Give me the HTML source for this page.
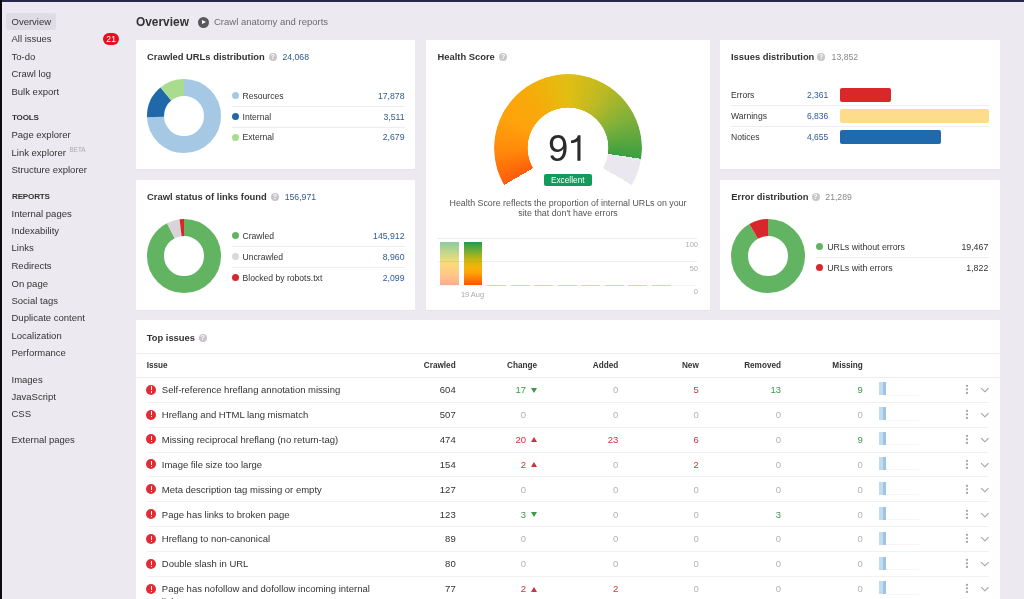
<!DOCTYPE html><html><head><meta charset="utf-8"><style>
*{margin:0;padding:0;box-sizing:border-box}
html,body{width:1024px;height:599px;overflow:hidden;background:#ede9f0;font-family:"Liberation Sans",sans-serif;color:#333}
.a{position:absolute;white-space:nowrap;line-height:12px}
.sb{position:absolute;left:11.5px;font-size:9.5px;color:#333;line-height:12px;white-space:nowrap}
.sh{position:absolute;left:12px;font-size:8.1px;font-weight:bold;color:#333;letter-spacing:-0.2px;line-height:12px}
.card{position:absolute;background:#fff;box-shadow:0 1px 0 rgba(90,60,100,0.035)}
.ttl{position:absolute;font-size:9.4px;font-weight:bold;color:#333;line-height:12px;white-space:nowrap}
.q{position:absolute;width:8px;height:8px;border-radius:50%;background:#c9c5ca}
.q:after{content:"?";position:absolute;left:0;top:0;width:8px;text-align:center;color:#fff;font-size:6.5px;font-weight:bold;line-height:8px}
.hn{position:absolute;font-size:8.7px;line-height:12px;white-space:nowrap}
.blue{color:#2f5a93}
.gray{color:#8a878c}
.lg{position:absolute;font-size:8.6px;line-height:12px;white-space:nowrap;color:#333}
.dot{position:absolute;width:7px;height:7px;border-radius:50%}
.sep{position:absolute;height:1px;background:#f0ebf0}
.rt{position:absolute;white-space:nowrap;line-height:12px;text-align:right;width:80px}
.th{font-size:8.2px;font-weight:bold;color:#333}
.td{font-size:9.5px}
.g{color:#3b9a4b}.r{color:#cc3141}.z{color:#b3b0b5}.k{color:#333}
.blue{color:#2f5a93}
.gray{color:#8a878c}
</style></head><body><div id="w" style="position:absolute;left:-4px;top:-4px;width:1036px;height:611px;background:#ede9f0;will-change:transform"><div style="position:absolute;left:4px;top:4px;width:1024px;height:599px">
<div style="position:absolute;left:-4px;top:-4px;width:1036px;height:6px;background:#262a48"></div>
<div style="position:absolute;left:-4px;top:-4px;width:6px;height:611px;background:#0c0c10"></div>
<div style="position:absolute;left:6px;top:13px;width:50px;height:16.5px;background:#dfdce6;border-radius:2px"></div>
<div class="sb" style="left:11.5px;top:15.50px;">Overview</div>
<div class="sb" style="left:11.5px;top:33.00px;">All issues</div>
<div class="sb" style="left:11.5px;top:50.50px;">To-do</div>
<div class="sb" style="left:11.5px;top:68.00px;">Crawl log</div>
<div class="sb" style="left:11.5px;top:85.50px;">Bulk export</div>
<div class="sb" style="left:11.5px;top:129.00px;">Page explorer</div>
<div class="sb" style="left:11.5px;top:146.50px;">Link explorer</div>
<div class="sb" style="left:11.5px;top:164.00px;">Structure explorer</div>
<div class="sb" style="left:11.5px;top:207.50px;">Internal pages</div>
<div class="sb" style="left:11.5px;top:225.00px;">Indexability</div>
<div class="sb" style="left:11.5px;top:242.00px;">Links</div>
<div class="sb" style="left:11.5px;top:259.60px;">Redirects</div>
<div class="sb" style="left:11.5px;top:277.50px;">On page</div>
<div class="sb" style="left:11.5px;top:295.20px;">Social tags</div>
<div class="sb" style="left:11.5px;top:312.20px;">Duplicate content</div>
<div class="sb" style="left:11.5px;top:329.80px;">Localization</div>
<div class="sb" style="left:11.5px;top:347.20px;">Performance</div>
<div class="sb" style="left:11.5px;top:373.50px;">Images</div>
<div class="sb" style="left:11.5px;top:390.80px;">JavaScript</div>
<div class="sb" style="left:11.5px;top:408.00px;">CSS</div>
<div class="sb" style="left:11.5px;top:434.00px;">External pages</div>
<div class="sh" style="left:12px;top:112.20px;">TOOLS</div>
<div class="sh" style="left:12px;top:190.60px;">REPORTS</div>
<div style="position:absolute;left:69.6px;top:146px;font-size:6.3px;color:#aaa;line-height:8px">BETA</div>
<div style="position:absolute;left:102.8px;top:33px;width:16.7px;height:12px;border-radius:6px;background:#e3111b;color:#fff;font-size:8.6px;line-height:12.6px;text-align:center">21</div>
<div class="a" style="left:136px;top:15.00px;font-size:11.9px;font-weight:bold;color:#333;line-height:14px">Overview</div>
<div style="position:absolute;left:197.7px;top:16.9px;width:11px;height:11px;border-radius:50%;background:#5a585c"></div>
<div style="position:absolute;left:201.6px;top:19.7px;width:0;height:0;border-left:4.5px solid #fff;border-top:2.7px solid transparent;border-bottom:2.7px solid transparent"></div>
<div class="a" style="left:214px;top:16.30px;font-size:9.5px;color:#6e6b70">Crawl anatomy and reports</div>
<div class="card" style="left:136px;top:40px;width:279.3px;height:129.3px"></div>
<div class="card" style="left:136px;top:179.8px;width:279.3px;height:130.2px"></div>
<div class="card" style="left:425.8px;top:40px;width:284.2px;height:270px"></div>
<div class="card" style="left:719.8px;top:40px;width:280.2px;height:129.3px"></div>
<div class="card" style="left:719.8px;top:179.8px;width:280.2px;height:130.2px"></div>
<div class="card" style="left:136px;top:319.8px;width:864px;height:290px"></div>
<div class="ttl" style="left:147px;top:50.60px;">Crawled URLs distribution</div>
<div class="q" style="left:268.70px;top:52.60px"></div>
<div class="hn blue" style="left:282.4px;top:50.80px;">24,068</div>
<svg style="position:absolute;left:146.70px;top:78.80px" width="74" height="74" viewBox="0 0 74 74"><circle cx="37" cy="37" r="28.5" fill="none" stroke="#a5c9e5" stroke-width="17" stroke-dasharray="133.016 179.071" stroke-dashoffset="0.000" transform="rotate(-90 37 37)"/><circle cx="37" cy="37" r="28.5" fill="none" stroke="#1f69ab" stroke-width="17" stroke-dasharray="26.123 179.071" stroke-dashoffset="-133.016" transform="rotate(-90 37 37)"/><circle cx="37" cy="37" r="28.5" fill="none" stroke="#a9dc8e" stroke-width="17" stroke-dasharray="19.932 179.071" stroke-dashoffset="-159.138" transform="rotate(-90 37 37)"/></svg>
<div class="dot" style="left:231.5px;top:92.30px;background:#a5c9e5"></div>
<div class="lg" style="left:242.5px;top:89.80px;">Resources</div>
<div class="rt lg blue" style="left:324.50px;width:80px;top:89.80px;font-size:8.7px">17,878</div>
<div class="dot" style="left:231.5px;top:113.00px;background:#1f69ab"></div>
<div class="lg" style="left:242.5px;top:110.50px;">Internal</div>
<div class="rt lg blue" style="left:324.50px;width:80px;top:110.50px;font-size:8.7px">3,511</div>
<div class="dot" style="left:231.5px;top:133.50px;background:#a9dc8e"></div>
<div class="lg" style="left:242.5px;top:131.00px;">External</div>
<div class="rt lg blue" style="left:324.50px;width:80px;top:131.00px;font-size:8.7px">2,679</div>
<div class="sep" style="left:231.5px;top:105.80px;width:173px"></div>
<div class="sep" style="left:231.5px;top:126.80px;width:173px"></div>
<div class="ttl" style="left:147px;top:191.20px;">Crawl status of links found</div>
<div class="q" style="left:271.00px;top:193.20px"></div>
<div class="hn blue" style="left:284.7px;top:191.40px;">156,971</div>
<svg style="position:absolute;left:146.70px;top:219.10px" width="74" height="74" viewBox="0 0 74 74"><circle cx="37" cy="37" r="28.5" fill="none" stroke="#62b462" stroke-width="17" stroke-dasharray="165.103 179.071" stroke-dashoffset="0.000" transform="rotate(-90 37 37)"/><circle cx="37" cy="37" r="28.5" fill="none" stroke="#d8d4da" stroke-width="17" stroke-dasharray="10.207 179.071" stroke-dashoffset="-165.103" transform="rotate(-90 37 37)"/><circle cx="37" cy="37" r="28.5" fill="none" stroke="#d9262a" stroke-width="17" stroke-dasharray="3.760 179.071" stroke-dashoffset="-175.310" transform="rotate(-90 37 37)"/></svg>
<div class="dot" style="left:231.5px;top:232.40px;background:#62b462"></div>
<div class="lg" style="left:242.5px;top:229.90px;">Crawled</div>
<div class="rt lg blue" style="left:324.50px;width:80px;top:229.90px;font-size:8.7px">145,912</div>
<div class="dot" style="left:231.5px;top:253.20px;background:#dcd8dd"></div>
<div class="lg" style="left:242.5px;top:250.70px;">Uncrawled</div>
<div class="rt lg blue" style="left:324.50px;width:80px;top:250.70px;font-size:8.7px">8,960</div>
<div class="dot" style="left:231.5px;top:274.00px;background:#d9262a"></div>
<div class="lg" style="left:242.5px;top:271.50px;">Blocked by robots.txt</div>
<div class="rt lg blue" style="left:324.50px;width:80px;top:271.50px;font-size:8.7px">2,099</div>
<div class="sep" style="left:231.5px;top:246.30px;width:173px"></div>
<div class="sep" style="left:231.5px;top:266.80px;width:173px"></div>
<div class="ttl" style="left:437.5px;top:50.60px;">Health Score</div>
<div class="q" style="left:499.20px;top:52.60px"></div>
<div style="position:absolute;left:493.60px;top:73.70px;width:148px;height:148px;border-radius:50%;background:conic-gradient(from 240deg, #ff5c0a 0deg, #ff8a0a 28deg, #ffa20c 55deg, #f7ab0a 85deg, #e2be12 120deg, #bdb924 152deg, #7eb03a 185deg, #3b9f42 218.4deg, #ebe7ee 218.4deg, #ebe7ee 240deg, transparent 240deg);-webkit-mask:radial-gradient(circle at center, transparent 40px, #000 40.6px);mask:radial-gradient(circle at center, transparent 40px, #000 40.6px)"></div>
<div style="position:absolute;left:547.9px;top:128.6px;font-size:36.5px;line-height:40px;color:#2b2a2e">9</div>
<svg style="position:absolute;left:0;top:0" width="1024" height="599"><path d="M580.5 135.3 L577.9 135.3 C577.2 138.6 574.6 140.4 571 140.6 L571 143.1 C574 143.1 576.3 142.3 577.4 141.2 L577.4 160.7 L580.5 160.7 Z" fill="#2b2a2e"/></svg>
<div style="position:absolute;left:543.5px;top:173.8px;width:48.5px;height:12.2px;border-radius:2px;background:#129b5d;color:#fff;font-size:8.3px;line-height:13.1px;text-align:center;overflow:hidden">Excellent</div>
<div style="position:absolute;left:428px;top:197.8px;width:280px;text-align:center;font-size:8.85px;line-height:10.6px;color:#555">Health Score reflects the proportion of internal URLs on your<br>site that don't have errors</div>
<div class="sep" style="left:437px;top:238.00px;width:260px;background:#f0ecf0"></div>
<div class="sep" style="left:437px;top:260.75px;width:260px;background:#f0ecf0"></div>
<div class="sep" style="left:437px;top:285px;width:260px;background:#f6f3f6"></div>
<div class="rt " style="left:618.00px;width:80px;top:239.20px;font-size:7.5px;color:#b0adb2">100</div>
<div class="rt " style="left:618.00px;width:80px;top:262.50px;font-size:7.5px;color:#b0adb2">50</div>
<div class="rt " style="left:618.00px;width:80px;top:285.80px;font-size:7.5px;color:#b0adb2">0</div>
<div style="position:absolute;left:440px;top:242px;width:18.5px;height:43.4px;background:linear-gradient(#8ccca2,#b9d48e 20%,#e6dc7c 40%,#fdd87a 55%,#ffc48a 80%,#ffab8c)"></div>
<div style="position:absolute;left:463.5px;top:242px;width:18.5px;height:43.4px;background:linear-gradient(#289a4a,#78ae32 22%,#c9b810 42%,#f3b40a 58%,#ffa308 72%,#ff5200)"></div><div style="position:absolute;left:440px;top:260.75px;width:18.5px;height:1px;background:rgba(120,90,60,0.07)"></div><div style="position:absolute;left:463.5px;top:260.75px;width:18.5px;height:1px;background:rgba(120,90,60,0.07)"></div>
<div style="position:absolute;left:487.00px;top:284.6px;width:19px;height:1.3px;background:#f3c9b6"></div>
<div style="position:absolute;left:510.50px;top:284.6px;width:19px;height:1.3px;background:#f3c9b6"></div>
<div style="position:absolute;left:534.00px;top:284.6px;width:19px;height:1.3px;background:#f3c9b6"></div>
<div style="position:absolute;left:557.50px;top:284.6px;width:19px;height:1.3px;background:#f3c9b6"></div>
<div style="position:absolute;left:581.00px;top:284.6px;width:19px;height:1.3px;background:#f3c9b6"></div>
<div style="position:absolute;left:604.50px;top:284.6px;width:19px;height:1.3px;background:#f3c9b6"></div>
<div style="position:absolute;left:628.00px;top:284.6px;width:19px;height:1.3px;background:#f3c9b6"></div>
<div style="position:absolute;left:651.50px;top:284.6px;width:19px;height:1.3px;background:#f3c9b6"></div>
<div style="position:absolute;left:447.5px;top:290px;width:50px;text-align:center;font-size:7.4px;line-height:10px;color:#aaa">19 Aug</div>
<div class="ttl" style="left:731px;top:50.60px;">Issues distribution</div>
<div class="q" style="left:817.30px;top:52.60px"></div>
<div class="hn gray" style="left:831.6px;top:50.80px;">13,852</div>
<div class="lg" style="left:731px;top:88.80px;">Errors</div>
<div class="lg blue" style="left:807px;top:88.80px;font-size:8.5px">2,361</div>
<div style="position:absolute;left:839.8px;top:87.80px;width:51px;height:14px;border-radius:2px;background:#d9282a"></div>
<div class="lg" style="left:731px;top:109.90px;">Warnings</div>
<div class="lg blue" style="left:807px;top:109.90px;font-size:8.5px">6,836</div>
<div style="position:absolute;left:839.8px;top:108.90px;width:149px;height:14px;border-radius:2px;background:#fedc8b"></div>
<div class="lg" style="left:731px;top:130.60px;">Notices</div>
<div class="lg blue" style="left:807px;top:130.60px;font-size:8.5px">4,655</div>
<div style="position:absolute;left:839.8px;top:129.60px;width:101.2px;height:14px;border-radius:2px;background:#1f6aac"></div>
<div class="sep" style="left:731px;top:104.90px;width:258px"></div>
<div class="sep" style="left:731px;top:126.00px;width:258px"></div>
<div class="ttl" style="left:731.3px;top:191.00px;">Error distribution</div>
<div class="q" style="left:811.50px;top:193.00px"></div>
<div class="hn gray" style="left:825.3px;top:191.20px;">21,289</div>
<svg style="position:absolute;left:731.20px;top:219.40px" width="74" height="74" viewBox="0 0 74 74"><circle cx="37" cy="37" r="28.5" fill="none" stroke="#62b462" stroke-width="17" stroke-dasharray="163.745 179.071" stroke-dashoffset="0.000" transform="rotate(-90 37 37)"/><circle cx="37" cy="37" r="28.5" fill="none" stroke="#d9262a" stroke-width="17" stroke-dasharray="15.326 179.071" stroke-dashoffset="-163.745" transform="rotate(-90 37 37)"/></svg>
<div class="dot" style="left:815.90px;top:243.40px;background:#62b462"></div>
<div class="lg" style="left:827.2px;top:240.90px;font-size:8.8px">URLs without errors</div>
<div class="rt lg" style="left:908.30px;width:80px;top:240.90px;font-size:8.8px">19,467</div>
<div class="dot" style="left:815.90px;top:264.40px;background:#d9262a"></div>
<div class="lg" style="left:827.2px;top:261.90px;font-size:8.8px">URLs with errors</div>
<div class="rt lg" style="left:908.30px;width:80px;top:261.90px;font-size:8.8px">1,822</div>
<div class="sep" style="left:816.3px;top:256.5px;width:172.7px"></div>
<div class="ttl" style="left:146.7px;top:332.00px;">Top issues</div>
<div class="q" style="left:198.80px;top:334.00px"></div>
<div class="sep" style="left:136px;top:353px;width:864px"></div>
<div class="sep" style="left:136px;top:376.7px;width:864px"></div>
<div class="a th" style="left:146.7px;top:359.80px;">Issue</div>
<div class="rt th" style="left:375.70px;width:80px;top:359.80px;">Crawled</div>
<div class="rt th" style="left:457.10px;width:80px;top:359.80px;">Change</div>
<div class="rt th" style="left:538.30px;width:80px;top:359.80px;">Added</div>
<div class="rt th" style="left:618.80px;width:80px;top:359.80px;">New</div>
<div class="rt th" style="left:701.00px;width:80px;top:359.80px;">Removed</div>
<div class="rt th" style="left:782.80px;width:80px;top:359.80px;">Missing</div>
<div style="position:absolute;left:146.30px;top:384.60px;width:10px;height:10px;border-radius:50%;background:#e42a33"></div>
<div style="position:absolute;left:150.65px;top:386.40px;width:1.3px;height:4px;background:#fff"></div>
<div style="position:absolute;left:150.65px;top:391.30px;width:1.3px;height:1.3px;background:#fff"></div>
<div class="a td k" style="left:161.8px;top:384.00px;">Self-reference hreflang annotation missing</div>
<div class="rt td k" style="left:375.70px;width:80px;top:384.00px;">604</div>
<div class="rt td g" style="left:446.00px;width:80px;top:384.00px;">17</div>
<div style="position:absolute;left:531.2px;top:387.70px;width:0;height:0;border-top:5.2px solid #3b9a4b;border-left:3.35px solid transparent;border-right:3.35px solid transparent"></div>
<div class="rt td z" style="left:538.30px;width:80px;top:384.00px;">0</div>
<div class="rt td r" style="left:618.80px;width:80px;top:384.00px;">5</div>
<div class="rt td g" style="left:701.00px;width:80px;top:384.00px;">13</div>
<div class="rt td g" style="left:782.80px;width:80px;top:384.00px;">9</div>
<div style="position:absolute;left:879px;top:382.20px;width:3.5px;height:13.1px;background:#c3dbee"></div>
<div style="position:absolute;left:882.6px;top:382.20px;width:3.6px;height:13.1px;background:#9cc6e4"></div>
<div style="position:absolute;left:886.2px;top:394.60px;width:33px;height:1px;background:#f8f4f7"></div>
<svg style="position:absolute;left:963.7px;top:382.00px" width="6" height="16" viewBox="0 0 6 16"><circle cx="3" cy="3.8" r="1.15" fill="#a6a3a8"/><circle cx="3" cy="7.3" r="1.15" fill="#a6a3a8"/><circle cx="3" cy="10.9" r="1.15" fill="#a6a3a8"/></svg>
<svg style="position:absolute;left:979.5px;top:387.00px" width="10" height="6" viewBox="0 0 10 6"><path d="M1.1 1.2 L4.9 4.8 L8.5 1.2" fill="none" stroke="#a3a0a5" stroke-width="1.1"/></svg>
<div class="sep" style="left:146.7px;top:401.70px;width:842px;background:#f3eff3"></div>
<div style="position:absolute;left:146.30px;top:409.50px;width:10px;height:10px;border-radius:50%;background:#e42a33"></div>
<div style="position:absolute;left:150.65px;top:411.30px;width:1.3px;height:4px;background:#fff"></div>
<div style="position:absolute;left:150.65px;top:416.20px;width:1.3px;height:1.3px;background:#fff"></div>
<div class="a td k" style="left:161.8px;top:408.90px;">Hreflang and HTML lang mismatch</div>
<div class="rt td k" style="left:375.70px;width:80px;top:408.90px;">507</div>
<div class="rt td z" style="left:446.00px;width:80px;top:408.90px;">0</div>
<div class="rt td z" style="left:538.30px;width:80px;top:408.90px;">0</div>
<div class="rt td z" style="left:618.80px;width:80px;top:408.90px;">0</div>
<div class="rt td z" style="left:701.00px;width:80px;top:408.90px;">0</div>
<div class="rt td z" style="left:782.80px;width:80px;top:408.90px;">0</div>
<div style="position:absolute;left:879px;top:407.10px;width:3.5px;height:13.1px;background:#c3dbee"></div>
<div style="position:absolute;left:882.6px;top:407.10px;width:3.6px;height:13.1px;background:#9cc6e4"></div>
<div style="position:absolute;left:886.2px;top:419.50px;width:33px;height:1px;background:#f8f4f7"></div>
<svg style="position:absolute;left:963.7px;top:406.90px" width="6" height="16" viewBox="0 0 6 16"><circle cx="3" cy="3.8" r="1.15" fill="#a6a3a8"/><circle cx="3" cy="7.3" r="1.15" fill="#a6a3a8"/><circle cx="3" cy="10.9" r="1.15" fill="#a6a3a8"/></svg>
<svg style="position:absolute;left:979.5px;top:411.90px" width="10" height="6" viewBox="0 0 10 6"><path d="M1.1 1.2 L4.9 4.8 L8.5 1.2" fill="none" stroke="#a3a0a5" stroke-width="1.1"/></svg>
<div class="sep" style="left:146.7px;top:426.60px;width:842px;background:#f3eff3"></div>
<div style="position:absolute;left:146.30px;top:434.40px;width:10px;height:10px;border-radius:50%;background:#e42a33"></div>
<div style="position:absolute;left:150.65px;top:436.20px;width:1.3px;height:4px;background:#fff"></div>
<div style="position:absolute;left:150.65px;top:441.10px;width:1.3px;height:1.3px;background:#fff"></div>
<div class="a td k" style="left:161.8px;top:433.80px;">Missing reciprocal hreflang (no return-tag)</div>
<div class="rt td k" style="left:375.70px;width:80px;top:433.80px;">474</div>
<div class="rt td r" style="left:446.00px;width:80px;top:433.80px;">20</div>
<div style="position:absolute;left:531.2px;top:437.30px;width:0;height:0;border-bottom:5.2px solid #cc3141;border-left:3.35px solid transparent;border-right:3.35px solid transparent"></div>
<div class="rt td r" style="left:538.30px;width:80px;top:433.80px;">23</div>
<div class="rt td r" style="left:618.80px;width:80px;top:433.80px;">6</div>
<div class="rt td z" style="left:701.00px;width:80px;top:433.80px;">0</div>
<div class="rt td g" style="left:782.80px;width:80px;top:433.80px;">9</div>
<div style="position:absolute;left:879px;top:432.00px;width:3.5px;height:13.1px;background:#c3dbee"></div>
<div style="position:absolute;left:882.6px;top:432.00px;width:3.6px;height:13.1px;background:#9cc6e4"></div>
<div style="position:absolute;left:886.2px;top:444.40px;width:33px;height:1px;background:#f8f4f7"></div>
<svg style="position:absolute;left:963.7px;top:431.80px" width="6" height="16" viewBox="0 0 6 16"><circle cx="3" cy="3.8" r="1.15" fill="#a6a3a8"/><circle cx="3" cy="7.3" r="1.15" fill="#a6a3a8"/><circle cx="3" cy="10.9" r="1.15" fill="#a6a3a8"/></svg>
<svg style="position:absolute;left:979.5px;top:436.80px" width="10" height="6" viewBox="0 0 10 6"><path d="M1.1 1.2 L4.9 4.8 L8.5 1.2" fill="none" stroke="#a3a0a5" stroke-width="1.1"/></svg>
<div class="sep" style="left:146.7px;top:451.50px;width:842px;background:#f3eff3"></div>
<div style="position:absolute;left:146.30px;top:459.30px;width:10px;height:10px;border-radius:50%;background:#e42a33"></div>
<div style="position:absolute;left:150.65px;top:461.10px;width:1.3px;height:4px;background:#fff"></div>
<div style="position:absolute;left:150.65px;top:466.00px;width:1.3px;height:1.3px;background:#fff"></div>
<div class="a td k" style="left:161.8px;top:458.70px;">Image file size too large</div>
<div class="rt td k" style="left:375.70px;width:80px;top:458.70px;">154</div>
<div class="rt td r" style="left:446.00px;width:80px;top:458.70px;">2</div>
<div style="position:absolute;left:531.2px;top:462.20px;width:0;height:0;border-bottom:5.2px solid #cc3141;border-left:3.35px solid transparent;border-right:3.35px solid transparent"></div>
<div class="rt td z" style="left:538.30px;width:80px;top:458.70px;">0</div>
<div class="rt td r" style="left:618.80px;width:80px;top:458.70px;">2</div>
<div class="rt td z" style="left:701.00px;width:80px;top:458.70px;">0</div>
<div class="rt td z" style="left:782.80px;width:80px;top:458.70px;">0</div>
<div style="position:absolute;left:879px;top:456.90px;width:3.5px;height:13.1px;background:#c3dbee"></div>
<div style="position:absolute;left:882.6px;top:456.90px;width:3.6px;height:13.1px;background:#9cc6e4"></div>
<div style="position:absolute;left:886.2px;top:469.30px;width:33px;height:1px;background:#f8f4f7"></div>
<svg style="position:absolute;left:963.7px;top:456.70px" width="6" height="16" viewBox="0 0 6 16"><circle cx="3" cy="3.8" r="1.15" fill="#a6a3a8"/><circle cx="3" cy="7.3" r="1.15" fill="#a6a3a8"/><circle cx="3" cy="10.9" r="1.15" fill="#a6a3a8"/></svg>
<svg style="position:absolute;left:979.5px;top:461.70px" width="10" height="6" viewBox="0 0 10 6"><path d="M1.1 1.2 L4.9 4.8 L8.5 1.2" fill="none" stroke="#a3a0a5" stroke-width="1.1"/></svg>
<div class="sep" style="left:146.7px;top:476.40px;width:842px;background:#f3eff3"></div>
<div style="position:absolute;left:146.30px;top:484.20px;width:10px;height:10px;border-radius:50%;background:#e42a33"></div>
<div style="position:absolute;left:150.65px;top:486.00px;width:1.3px;height:4px;background:#fff"></div>
<div style="position:absolute;left:150.65px;top:490.90px;width:1.3px;height:1.3px;background:#fff"></div>
<div class="a td k" style="left:161.8px;top:483.60px;">Meta description tag missing or empty</div>
<div class="rt td k" style="left:375.70px;width:80px;top:483.60px;">127</div>
<div class="rt td z" style="left:446.00px;width:80px;top:483.60px;">0</div>
<div class="rt td z" style="left:538.30px;width:80px;top:483.60px;">0</div>
<div class="rt td z" style="left:618.80px;width:80px;top:483.60px;">0</div>
<div class="rt td z" style="left:701.00px;width:80px;top:483.60px;">0</div>
<div class="rt td z" style="left:782.80px;width:80px;top:483.60px;">0</div>
<div style="position:absolute;left:879px;top:481.80px;width:3.5px;height:13.1px;background:#c3dbee"></div>
<div style="position:absolute;left:882.6px;top:481.80px;width:3.6px;height:13.1px;background:#9cc6e4"></div>
<div style="position:absolute;left:886.2px;top:494.20px;width:33px;height:1px;background:#f8f4f7"></div>
<svg style="position:absolute;left:963.7px;top:481.60px" width="6" height="16" viewBox="0 0 6 16"><circle cx="3" cy="3.8" r="1.15" fill="#a6a3a8"/><circle cx="3" cy="7.3" r="1.15" fill="#a6a3a8"/><circle cx="3" cy="10.9" r="1.15" fill="#a6a3a8"/></svg>
<svg style="position:absolute;left:979.5px;top:486.60px" width="10" height="6" viewBox="0 0 10 6"><path d="M1.1 1.2 L4.9 4.8 L8.5 1.2" fill="none" stroke="#a3a0a5" stroke-width="1.1"/></svg>
<div class="sep" style="left:146.7px;top:501.30px;width:842px;background:#f3eff3"></div>
<div style="position:absolute;left:146.30px;top:509.10px;width:10px;height:10px;border-radius:50%;background:#e42a33"></div>
<div style="position:absolute;left:150.65px;top:510.90px;width:1.3px;height:4px;background:#fff"></div>
<div style="position:absolute;left:150.65px;top:515.80px;width:1.3px;height:1.3px;background:#fff"></div>
<div class="a td k" style="left:161.8px;top:508.50px;">Page has links to broken page</div>
<div class="rt td k" style="left:375.70px;width:80px;top:508.50px;">123</div>
<div class="rt td g" style="left:446.00px;width:80px;top:508.50px;">3</div>
<div style="position:absolute;left:531.2px;top:512.20px;width:0;height:0;border-top:5.2px solid #3b9a4b;border-left:3.35px solid transparent;border-right:3.35px solid transparent"></div>
<div class="rt td z" style="left:538.30px;width:80px;top:508.50px;">0</div>
<div class="rt td z" style="left:618.80px;width:80px;top:508.50px;">0</div>
<div class="rt td g" style="left:701.00px;width:80px;top:508.50px;">3</div>
<div class="rt td z" style="left:782.80px;width:80px;top:508.50px;">0</div>
<div style="position:absolute;left:879px;top:506.70px;width:3.5px;height:13.1px;background:#c3dbee"></div>
<div style="position:absolute;left:882.6px;top:506.70px;width:3.6px;height:13.1px;background:#9cc6e4"></div>
<div style="position:absolute;left:886.2px;top:519.10px;width:33px;height:1px;background:#f8f4f7"></div>
<svg style="position:absolute;left:963.7px;top:506.50px" width="6" height="16" viewBox="0 0 6 16"><circle cx="3" cy="3.8" r="1.15" fill="#a6a3a8"/><circle cx="3" cy="7.3" r="1.15" fill="#a6a3a8"/><circle cx="3" cy="10.9" r="1.15" fill="#a6a3a8"/></svg>
<svg style="position:absolute;left:979.5px;top:511.50px" width="10" height="6" viewBox="0 0 10 6"><path d="M1.1 1.2 L4.9 4.8 L8.5 1.2" fill="none" stroke="#a3a0a5" stroke-width="1.1"/></svg>
<div class="sep" style="left:146.7px;top:526.20px;width:842px;background:#f3eff3"></div>
<div style="position:absolute;left:146.30px;top:534.00px;width:10px;height:10px;border-radius:50%;background:#e42a33"></div>
<div style="position:absolute;left:150.65px;top:535.80px;width:1.3px;height:4px;background:#fff"></div>
<div style="position:absolute;left:150.65px;top:540.70px;width:1.3px;height:1.3px;background:#fff"></div>
<div class="a td k" style="left:161.8px;top:533.40px;">Hreflang to non-canonical</div>
<div class="rt td k" style="left:375.70px;width:80px;top:533.40px;">89</div>
<div class="rt td z" style="left:446.00px;width:80px;top:533.40px;">0</div>
<div class="rt td z" style="left:538.30px;width:80px;top:533.40px;">0</div>
<div class="rt td z" style="left:618.80px;width:80px;top:533.40px;">0</div>
<div class="rt td z" style="left:701.00px;width:80px;top:533.40px;">0</div>
<div class="rt td z" style="left:782.80px;width:80px;top:533.40px;">0</div>
<div style="position:absolute;left:879px;top:531.60px;width:3.5px;height:13.1px;background:#c3dbee"></div>
<div style="position:absolute;left:882.6px;top:531.60px;width:3.6px;height:13.1px;background:#9cc6e4"></div>
<div style="position:absolute;left:886.2px;top:544.00px;width:33px;height:1px;background:#f8f4f7"></div>
<svg style="position:absolute;left:963.7px;top:531.40px" width="6" height="16" viewBox="0 0 6 16"><circle cx="3" cy="3.8" r="1.15" fill="#a6a3a8"/><circle cx="3" cy="7.3" r="1.15" fill="#a6a3a8"/><circle cx="3" cy="10.9" r="1.15" fill="#a6a3a8"/></svg>
<svg style="position:absolute;left:979.5px;top:536.40px" width="10" height="6" viewBox="0 0 10 6"><path d="M1.1 1.2 L4.9 4.8 L8.5 1.2" fill="none" stroke="#a3a0a5" stroke-width="1.1"/></svg>
<div class="sep" style="left:146.7px;top:551.10px;width:842px;background:#f3eff3"></div>
<div style="position:absolute;left:146.30px;top:558.90px;width:10px;height:10px;border-radius:50%;background:#e42a33"></div>
<div style="position:absolute;left:150.65px;top:560.70px;width:1.3px;height:4px;background:#fff"></div>
<div style="position:absolute;left:150.65px;top:565.60px;width:1.3px;height:1.3px;background:#fff"></div>
<div class="a td k" style="left:161.8px;top:558.30px;">Double slash in URL</div>
<div class="rt td k" style="left:375.70px;width:80px;top:558.30px;">80</div>
<div class="rt td z" style="left:446.00px;width:80px;top:558.30px;">0</div>
<div class="rt td z" style="left:538.30px;width:80px;top:558.30px;">0</div>
<div class="rt td z" style="left:618.80px;width:80px;top:558.30px;">0</div>
<div class="rt td z" style="left:701.00px;width:80px;top:558.30px;">0</div>
<div class="rt td z" style="left:782.80px;width:80px;top:558.30px;">0</div>
<div style="position:absolute;left:879px;top:556.50px;width:3.5px;height:13.1px;background:#c3dbee"></div>
<div style="position:absolute;left:882.6px;top:556.50px;width:3.6px;height:13.1px;background:#9cc6e4"></div>
<div style="position:absolute;left:886.2px;top:568.90px;width:33px;height:1px;background:#f8f4f7"></div>
<svg style="position:absolute;left:963.7px;top:556.30px" width="6" height="16" viewBox="0 0 6 16"><circle cx="3" cy="3.8" r="1.15" fill="#a6a3a8"/><circle cx="3" cy="7.3" r="1.15" fill="#a6a3a8"/><circle cx="3" cy="10.9" r="1.15" fill="#a6a3a8"/></svg>
<svg style="position:absolute;left:979.5px;top:561.30px" width="10" height="6" viewBox="0 0 10 6"><path d="M1.1 1.2 L4.9 4.8 L8.5 1.2" fill="none" stroke="#a3a0a5" stroke-width="1.1"/></svg>
<div class="sep" style="left:146.7px;top:576.00px;width:842px;background:#f3eff3"></div>
<div style="position:absolute;left:146.30px;top:583.80px;width:10px;height:10px;border-radius:50%;background:#e42a33"></div>
<div style="position:absolute;left:150.65px;top:585.60px;width:1.3px;height:4px;background:#fff"></div>
<div style="position:absolute;left:150.65px;top:590.50px;width:1.3px;height:1.3px;background:#fff"></div>
<div class="a td k" style="left:161.8px;top:583.20px;">Page has nofollow and dofollow incoming internal</div>
<div class="a td k" style="left:161.8px;top:595.70px;">links</div>
<div class="rt td k" style="left:375.70px;width:80px;top:583.20px;">77</div>
<div class="rt td r" style="left:446.00px;width:80px;top:583.20px;">2</div>
<div style="position:absolute;left:531.2px;top:586.70px;width:0;height:0;border-bottom:5.2px solid #cc3141;border-left:3.35px solid transparent;border-right:3.35px solid transparent"></div>
<div class="rt td r" style="left:538.30px;width:80px;top:583.20px;">2</div>
<div class="rt td z" style="left:618.80px;width:80px;top:583.20px;">0</div>
<div class="rt td z" style="left:701.00px;width:80px;top:583.20px;">0</div>
<div class="rt td z" style="left:782.80px;width:80px;top:583.20px;">0</div>
<div style="position:absolute;left:879px;top:581.40px;width:3.5px;height:13.1px;background:#c3dbee"></div>
<div style="position:absolute;left:882.6px;top:581.40px;width:3.6px;height:13.1px;background:#9cc6e4"></div>
<div style="position:absolute;left:886.2px;top:593.80px;width:33px;height:1px;background:#f8f4f7"></div>
<svg style="position:absolute;left:963.7px;top:581.20px" width="6" height="16" viewBox="0 0 6 16"><circle cx="3" cy="3.8" r="1.15" fill="#a6a3a8"/><circle cx="3" cy="7.3" r="1.15" fill="#a6a3a8"/><circle cx="3" cy="10.9" r="1.15" fill="#a6a3a8"/></svg>
<svg style="position:absolute;left:979.5px;top:586.20px" width="10" height="6" viewBox="0 0 10 6"><path d="M1.1 1.2 L4.9 4.8 L8.5 1.2" fill="none" stroke="#a3a0a5" stroke-width="1.1"/></svg>
</div></div></body></html>
